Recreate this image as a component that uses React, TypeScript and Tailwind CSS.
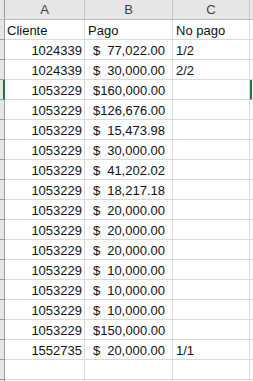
import React from "react";

// SHEET DATA: [cliente, pago, no pago]
const rows: [string, string, string][] = [
  ["1024339", "77,022.00", "1/2"],
  ["1024339", "30,000.00", "2/2"],
  ["1053229", "160,000.00", ""],
  ["1053229", "126,676.00", ""],
  ["1053229", "15,473.98", ""],
  ["1053229", "30,000.00", ""],
  ["1053229", "41,202.02", ""],
  ["1053229", "18,217.18", ""],
  ["1053229", "20,000.00", ""],
  ["1053229", "20,000.00", ""],
  ["1053229", "20,000.00", ""],
  ["1053229", "10,000.00", ""],
  ["1053229", "10,000.00", ""],
  ["1053229", "10,000.00", ""],
  ["1053229", "150,000.00", ""],
  ["1552735", "20,000.00", "1/1"],
  ["", "", ""],
  ["", "", ""],
];

const cell = "h-[20px] border-b border-r border-[#d9d9d9] pt-[2px] leading-[17px] overflow-hidden whitespace-nowrap";

export default function App() {
  return (
    <div
      className="w-[253px] h-[381px] overflow-hidden bg-white text-[13px] text-[#111]"
      style={{ fontFamily: '"Liberation Sans", Arial, sans-serif' }}
    >
      {/* COLUMN HEADERS */}
      <div className="flex h-[20px] bg-[#e6e6e6] border-b border-[#bdbdbd] text-[#444] leading-[19px]">
        <div className="w-[5px] shrink-0 border-r border-[#9e9e9e]" />
        <div className="w-[80px] shrink-0 border-r border-[#c8c8c8] text-center">A</div>
        <div className="w-[88px] shrink-0 border-r border-[#c8c8c8] text-center">B</div>
        <div className="w-[77px] shrink-0 border-r border-[#c8c8c8] text-center">C</div>
        <div className="flex-1" />
      </div>

      {/* TITLE ROW */}
      <div className="flex">
        <div className="w-[5px] h-[20px] shrink-0 bg-[#e6e6e6] border-b border-r border-[#9e9e9e]" />
        <div className={`${cell} w-[80px] shrink-0 pl-[2px]`}>Cliente</div>
        <div className={`${cell} w-[88px] shrink-0 pl-[3px]`}>Pago</div>
        <div className={`${cell} w-[77px] shrink-0 pl-[3px]`}>No pago</div>
        <div className="flex-1 h-[20px] border-b border-[#d9d9d9]" />
      </div>

      {/* DATA ROWS */}
      {rows.map(([cliente, pago, noPago], i) => {
        const selected = i === 2;
        return (
          <div key={i} className="flex">
            <div
              className={
                selected
                  ? "w-[5px] h-[20px] shrink-0 bg-[#e6e6e6] border-b border-[#9e9e9e] border-r-2 border-r-[#217346]"
                  : "w-[5px] h-[20px] shrink-0 bg-[#e6e6e6] border-b border-r border-[#9e9e9e]"
              }
            />
            <div className={`${cell} w-[80px] shrink-0 pr-[2px] text-right`}>{cliente}</div>
            <div className={`${cell} w-[88px] shrink-0 pl-[8px] pr-[7px] flex justify-between`}>
              {pago && (
                <>
                  <span>$</span>
                  <span>{pago}</span>
                </>
              )}
            </div>
            <div className={`${cell} w-[77px] shrink-0 pl-[3px]`}>{noPago}</div>
            <div
              className={
                selected
                  ? "flex-1 h-[20px] border-b border-[#d9d9d9] border-l-2 border-l-[#217346]"
                  : "flex-1 h-[20px] border-b border-[#d9d9d9]"
              }
            />
          </div>
        );
      })}
    </div>
  );
}
